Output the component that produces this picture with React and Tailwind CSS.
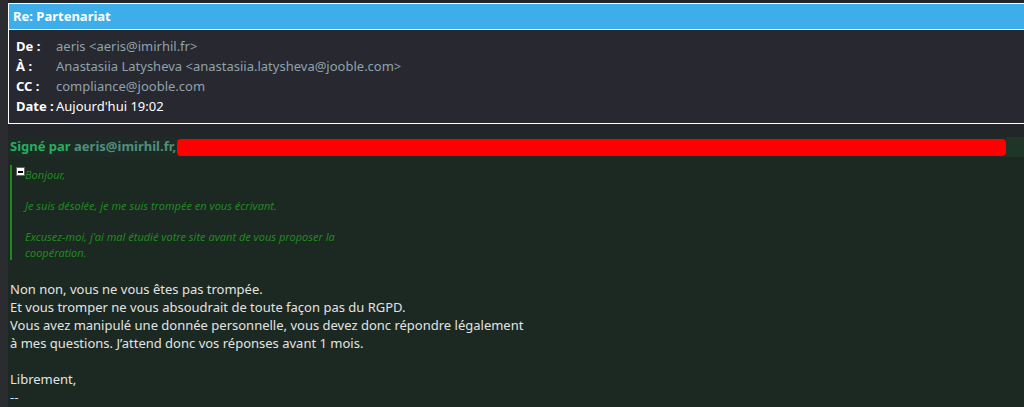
import React from "react";

const headers = [
  { label: "De :", value: "aeris <aeris@imirhil.fr>", muted: true },
  {
    label: "À :",
    value: "Anastasiia Latysheva <anastasiia.latysheva@jooble.com>",
    muted: true,
  },
  { label: "CC :", value: "compliance@jooble.com", muted: true },
  { label: "Date :", value: "Aujourd'hui 19:02", muted: false },
];

const quoted = [
  "Bonjour,",
  "",
  "Je suis désolée, je me suis trompée en vous écrivant.",
  "",
  "Excusez-moi, j'ai mal étudié votre site avant de vous proposer la",
  "coopération.",
];

const body = [
  "Non non, vous ne vous êtes pas trompée.",
  "Et vous tromper ne vous absoudrait de toute façon pas du RGPD.",
  "Vous avez manipulé une donnée personnelle, vous devez donc répondre légalement",
  "à mes questions. J’attend donc vos réponses avant 1 mois.",
  "",
  "Librement,",
  "--",
];

export default function App() {
  return (
    <div
      className="w-[1024px] h-[407px] overflow-hidden bg-[#232629] flex"
      style={{ fontFamily: '"Noto Sans", "Open Sans", sans-serif' }}
    >
      <div className="w-[8px] shrink-0 bg-[#2a2c30]" />
      <div className="flex-1 flex flex-col">
        {/* header box */}
        <div className="mt-[3px] border border-r-0 border-white bg-[#272830]">
          <div className="h-[26px] bg-[#3daee9] border-b border-white flex items-center pl-[4px] text-[13px] font-bold text-white">
            Re: Partenariat
          </div>
          <div className="pl-[7px] pt-[6px] pb-[7px] text-[13px] leading-[20px]">
            {headers.map((h) => (
              <div key={h.label} className="flex">
                <span className="font-bold text-white w-[40px] shrink-0">
                  {h.label}
                </span>
                <span className={h.muted ? "text-[#8fa3ab]" : "text-white"}>
                  {h.value}
                </span>
              </div>
            ))}
          </div>
        </div>

        {/* message */}
        <div className="mt-[13px] flex-1 bg-[#1c2822] flex flex-col">
          <div className="h-[20px] flex items-center bg-[#1e2b24] text-[13px] font-bold">
            <span className="pl-[2px] text-[#27ae60]">Signé par&nbsp;</span>
            <span className="text-[#4f8f80]">aeris@imirhil.fr,</span>
            <span className="ml-[1px] w-[829px] h-[17px] rounded-[4px] bg-[#ff0000]" />
            <span className="flex-1 h-full bg-[#1f3527]" />
          </div>

          <div className="mt-[8px] ml-[2px] border-l-2 border-[#1e8a1e] flex">
            <div className="pl-[4px] pt-[2px]">
              <div className="w-[9px] h-[9px] bg-white border border-[#666] flex items-center justify-center">
                <div className="w-[5px] h-[2px] bg-black" />
              </div>
            </div>
            <div className="pt-[2px] pb-0 text-[11px] leading-[15.5px] italic text-[#1f8a1f]">
              {quoted.map((l, i) => (
                <div key={i} className="h-[15.5px]">
                  {l}
                </div>
              ))}
            </div>
          </div>

          <div className="mt-[20px] pl-[2px] text-[13px] leading-[18px] text-[#e2e4e4]">
            {body.map((l, i) => (
              <div key={i} className="h-[18px]">
                {l}
              </div>
            ))}
          </div>
        </div>
      </div>
    </div>
  );
}
